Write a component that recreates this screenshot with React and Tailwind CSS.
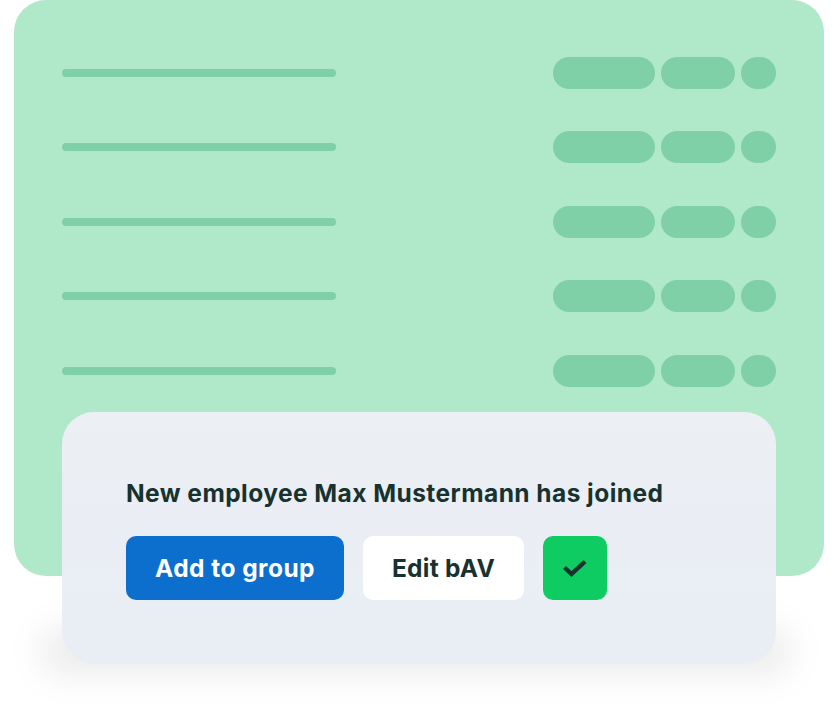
export default function App() {
  const rows = [0, 1, 2, 3, 4];
  return (
    <div className="relative w-[834px] h-[724px] bg-white overflow-hidden" style={{ fontFamily: '"Inter", "Liberation Sans", sans-serif' }}>
      <div className="ml-[14px] w-[810px] h-[576px] rounded-[32px] bg-[#b0e9c9] pl-[48px] pr-[48px] pt-[57px] flex flex-col gap-[43px]">
        {rows.map((r) => (
          <div key={r} className="flex items-center justify-between h-[31.5px]">
            <div className="w-[274px] h-[8px] rounded-full bg-[#7fd0a6]" />
            <div className="flex gap-[6px]">
              <div className="w-[102px] h-[32px] rounded-full bg-[#7fd0a6]" />
              <div className="w-[74px] h-[32px] rounded-full bg-[#7fd0a6]" />
              <div className="w-[35px] h-[32px] rounded-full bg-[#7fd0a6]" />
            </div>
          </div>
        ))}
      </div>
      <div className="absolute left-[40px] top-[626px] w-[752px] h-[50px] rounded-[24px] bg-[#000000]/[0.07] blur-[16px]" />
      <div className="absolute left-[62px] top-[412px] w-[714px] h-[252px] rounded-[32px] bg-linear-to-b from-[#eceff3] to-[#e9eef6] pl-[64px] pt-[67px]">
        <div className="text-[24.5px] leading-[28px] font-bold tracking-[0.45px] text-[#17322f] whitespace-nowrap">New employee Max Mustermann has joined</div>
        <div className="flex items-center mt-[29px]">
          <div className="w-[218px] h-[64px] rounded-[10px] bg-[#0c6fce] text-white text-[24.5px] font-bold tracking-[0.45px] flex items-center justify-center">Add to group</div>
          <div className="ml-[19px] w-[161px] h-[64px] rounded-[10px] bg-white text-[#17322f] text-[24.5px] font-bold tracking-[0.25px] flex items-center justify-center">Edit bAV</div>
          <div className="ml-[19px] w-[64px] h-[64px] rounded-[10px] bg-[#0ecb62] flex items-center justify-center">
            <svg width="26" height="20" viewBox="0 0 26 20" fill="none">
              <path d="M2.5 9.5 L9.5 16 L23 3.5" stroke="#17322f" strokeWidth="4.4" />
            </svg>
          </div>
        </div>
      </div>
    </div>
  );
}
